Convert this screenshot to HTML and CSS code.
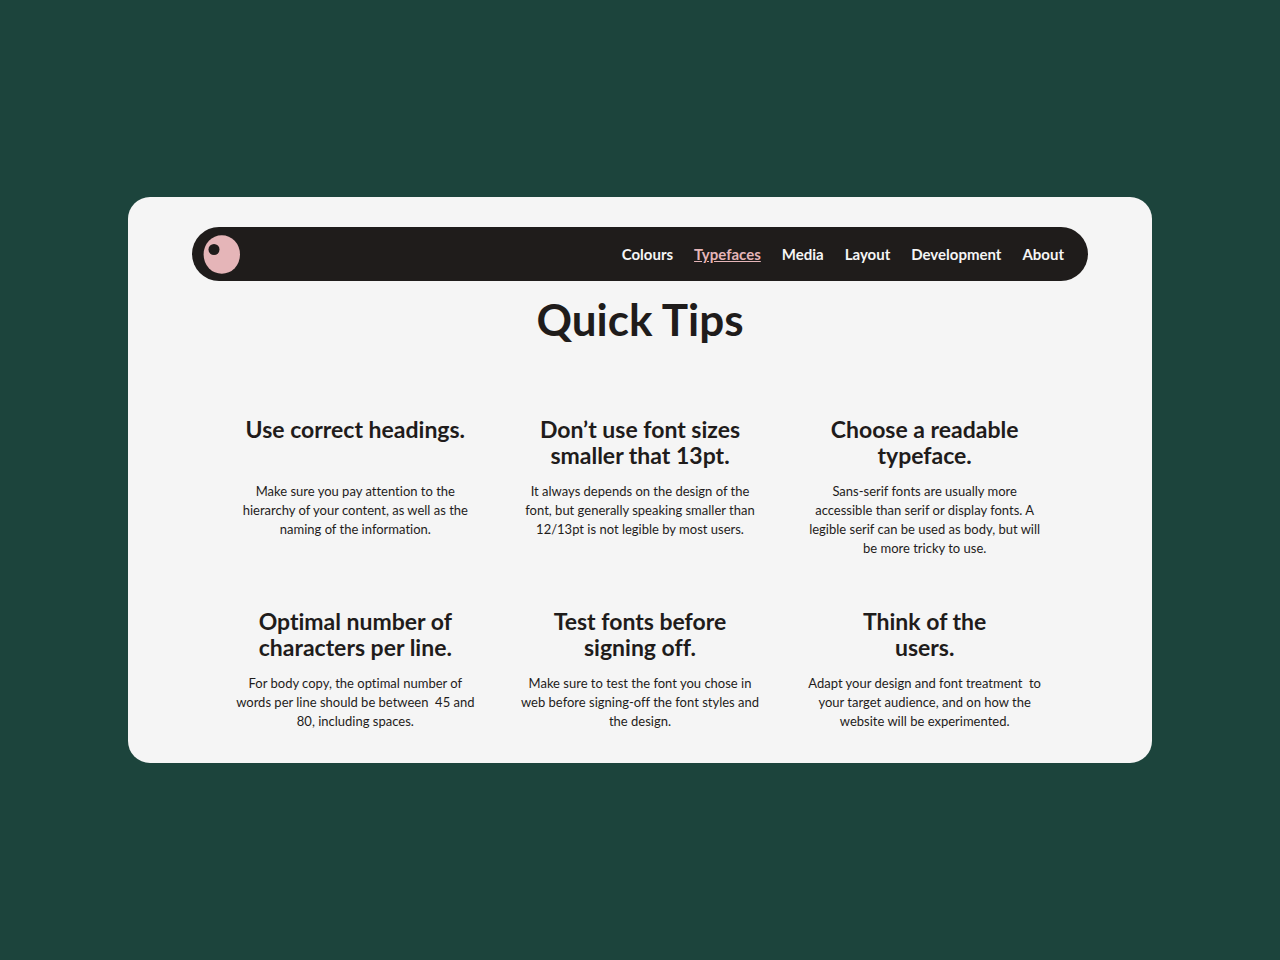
FILE: index.html
```html
<!DOCTYPE html>
<html lang="en">
<head>
    <meta charset="UTF-8">
    <meta name="viewport" content="width=device-width, initial-scale=1.0">
    <title>Quick Tips</title>
    <link rel="stylesheet" href="styles.css">
</head>
<body>
    <div class="card">
        <header class="navbar">
            <a class="logo" href="#" aria-label="Home">
                <svg width="37" height="39" viewBox="0 0 37 39">
                    <ellipse cx="18.8" cy="19.5" rx="18.2" ry="19.3" fill="#e5b5b8"/>
                    <circle cx="11" cy="14.5" r="5.5" fill="#1f1c1b"/>
                </svg>
            </a>
            <nav class="links">
                <a href="#">Colours</a>
                <a href="#" class="active">Typefaces</a>
                <a href="#">Media</a>
                <a href="#">Layout</a>
                <a href="#">Development</a>
                <a href="#">About</a>
            </nav>
        </header>
        <main>
            <h1>Quick Tips</h1>
            <div class="tips">
                <section class="tip">
                    <h2>Use correct headings.</h2>
                    <p>Make sure you pay attention to the<br>hierarchy of your content, as well as the<br>naming of the information.</p>
                </section>
                <section class="tip">
                    <h2>Don’t use font sizes<br>smaller that 13pt.</h2>
                    <p>It always depends on the design of the<br>font, but generally speaking smaller than<br>12/13pt is not legible by most users.</p>
                </section>
                <section class="tip">
                    <h2>Choose a readable<br>typeface.</h2>
                    <p>Sans-serif fonts are usually more<br>accessible than serif or display fonts. A<br>legible serif can be used as body, but will<br>be more tricky to use.</p>
                </section>
                <section class="tip">
                    <h2>Optimal number of<br>characters per line.</h2>
                    <p>For body copy, the optimal number of<br>words per line should be between &nbsp;45 and<br>80, including spaces.</p>
                </section>
                <section class="tip">
                    <h2>Test fonts before<br>signing off.</h2>
                    <p>Make sure to test the font you chose in<br>web before signing-off the font styles and<br>the design.</p>
                </section>
                <section class="tip">
                    <h2>Think of the<br>users.</h2>
                    <p>Adapt your design and font treatment &nbsp;to<br>your target audience, and on how the<br>website will be experimented.</p>
                </section>
            </div>
        </main>
    </div>
</body>
</html>
```

FILE: styles.css
```css
* { box-sizing: border-box; }
body { margin: 0; min-height: 100vh; display: flex; justify-content: center; align-items: center; background-color: #1c443c; color: #1f1c1b; font-family: Lato, "Open Sans", sans-serif; font-variant-ligatures: none; }
.card { width: 80%; padding: 30px 64px 32px; border-radius: 22px; background: #f5f5f5; }
.navbar { display: flex; justify-content: space-between; align-items: center; height: 54px; padding: 0 24px 0 11px; border-radius: 27px; background: #1f1c1b; }
.logo, .logo svg { display: block; }
.links { display: flex; gap: 21px; }
.links a { color: #f5f5f5; font-size: 15px; font-weight: 700; text-decoration: none; }
.links .active { color: #e5b5b8; text-decoration: underline; }
h1 { margin: 11px 0 70px; font-size: 44px; line-height: 54px; text-align: center; }
.tips { display: grid; grid-template-columns: repeat(3, 1fr); gap: 50px 20px; padding: 0 31px; text-align: center; }
h2 { min-height: 52px; margin: 0 0 14px; font-size: 23px; line-height: 26px; }
p { margin: 0; font-size: 13px; line-height: 19px; }
```
